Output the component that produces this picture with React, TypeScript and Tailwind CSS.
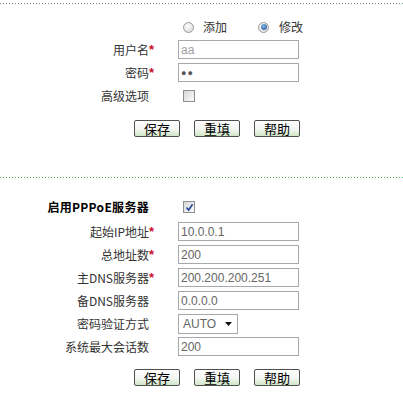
import type { ReactNode } from "react";

const cjk = "font-['Noto_Sans_CJK_SC','Noto_Sans',sans-serif]";
const latin = "font-['Liberation_Sans',Arial,sans-serif]";

function Dotted({ tone }: { tone: "gray" | "green" }) {
  return (
    <div
      className={
        tone === "gray"
          ? "h-px w-full bg-[repeating-linear-gradient(90deg,#6f8f76_0px,#6f8f76_1px,#ffffff_1px,#ffffff_3px)]"
          : "h-px w-full bg-[repeating-linear-gradient(90deg,#4fae4f_0px,#4fae4f_1px,#ffffff_1px,#ffffff_3px)]"
      }
    />
  );
}

function Radio({ checked }: { checked?: boolean }) {
  return (
    <span className="flex h-[11px] w-[11px] items-center justify-center rounded-full border border-[#9a9a9a] bg-[radial-gradient(circle_at_40%_35%,#ffffff,#d4d4d4)]">
      {checked && (
        <span className="h-[6px] w-[6px] rounded-full bg-[radial-gradient(circle_at_40%_35%,#7fb6e6,#1d4f86)]" />
      )}
    </span>
  );
}

function Checkbox({ checked }: { checked?: boolean }) {
  return (
    <span className="flex h-[12px] w-[12px] items-center justify-center border border-[#8f8f8f] bg-[linear-gradient(135deg,#d8d8d8,#fbfbfb)]">
      {checked && (
        <svg width="9" height="9" viewBox="0 0 9 9" aria-hidden>
          <path d="M1.5 4.5 L3.6 7 L7.6 1.2" fill="none" stroke="#2c4b9b" strokeWidth="1.7" />
        </svg>
      )}
    </span>
  );
}

function Row({ label, req, bold, h = "h-[23px]", children }: {
  label: string;
  req?: boolean;
  bold?: boolean;
  h?: string;
  children: ReactNode;
}) {
  return (
    <div className={`flex items-center ${h}`}>
      <div className="flex w-[158px] shrink-0 items-center justify-end">
        <span className={bold ? "text-[12px] font-bold leading-none tracking-[0.3px] text-black" : "text-[12px] leading-none text-[#333]"}>
          {label}
        </span>
        <span className={`w-[9px] text-[13px] font-bold leading-none text-[#c8102e] ${latin}`}>{req ? "*" : ""}</span>
      </div>
      <div className="ml-[20px] flex items-center">{children}</div>
    </div>
  );
}

function Field({ value, dim, dots }: { value: string; dim?: boolean; dots?: boolean }) {
  return (
    <input
      type="text"
      value={value}
      readOnly
      className={`h-[19px] w-[121px] border border-[#a5a9ac] bg-white px-[2px] leading-none outline-none ${latin} ${
        dots ? "text-[9px] tracking-[1px] text-[#555]" : dim ? "text-[12px] text-[#a0a0a0]" : "text-[12px] text-[#666]"
      }`}
    />
  );
}

function Buttons() {
  return (
    <div className="flex gap-[14px] pl-[134px]">
      {["保存", "重填", "帮助"].map((t) => (
        <button
          key={t}
          type="button"
          className="flex h-[17px] w-[46px] items-center justify-center rounded-[2px] border border-[#505050] bg-[linear-gradient(#ffffff,#f3f6f1_55%,#cfe6c6)] text-[13px] leading-none text-black"
        >
          {t}
        </button>
      ))}
    </div>
  );
}

export default function App() {
  return (
    <div className={`h-[397px] w-[403px] bg-white ${cjk}`}>
      <div className="pt-[3px]">
        <Dotted tone="gray" />
      </div>

      {/* account */}
      <div className="mt-[12px] flex h-[22px] items-center pl-[183px] text-[12px] text-[#333]">
        <Radio />
        <span className="ml-[9px] leading-none">添加</span>
        <span className="ml-[31px]"><Radio checked /></span>
        <span className="ml-[10px] leading-none">修改</span>
      </div>
      <Row label="用户名" req>
        <Field value="aa" dim />
      </Row>
      <Row label="密码" req>
        <Field value="●●" dots />
      </Row>
      <Row label="高级选项">
        <span className="ml-[5px]"><Checkbox /></span>
      </Row>
      <div className="mt-[13px]">
        <Buttons />
      </div>

      <div className="mt-[40px]">
        <Dotted tone="green" />
      </div>

      {/* pppoe server */}
      <div className="mt-[16px]">
        <Row label="启用PPPoE服务器" bold h="h-[26px]">
          <span className="ml-[5px]"><Checkbox checked /></span>
        </Row>
        <Row label="起始IP地址" req>
          <Field value="10.0.0.1" />
        </Row>
        <Row label="总地址数" req>
          <Field value="200" />
        </Row>
        <Row label="主DNS服务器" req>
          <Field value="200.200.200.251" />
        </Row>
        <Row label="备DNS服务器">
          <Field value="0.0.0.0" />
        </Row>
        <Row label="密码验证方式">
          <div className={`flex h-[20px] w-[60px] items-center justify-between border border-[#a5a9ac] bg-white pl-[4px] pr-[5px] text-[12px] text-[#666] ${latin}`}>
            <span className="leading-none">AUTO</span>
            <svg width="7" height="4" viewBox="0 0 7 4" aria-hidden>
              <path d="M0 0 H7 L3.5 4 Z" fill="#111" />
            </svg>
          </div>
        </Row>
        <Row label="系统最大会话数">
          <Field value="200" />
        </Row>
      </div>
      <div className="mt-[11px]">
        <Buttons />
      </div>
    </div>
  );
}
